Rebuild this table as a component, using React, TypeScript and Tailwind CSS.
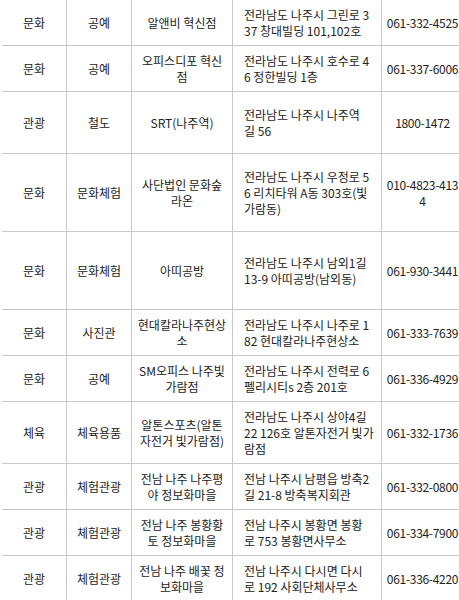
import React from 'react';

type Row = {
  cat: string;
  sub: string;
  name: string[];
  addr: string[];
  tel: string[];
  h: string;
};

const rows: Row[] = [
  { cat: '문화', sub: '공예', name: ['알앤비 혁신점'], addr: ['전라남도 나주시 그린로 3', '37 창대빌딩 101,102호'], tel: ['061-332-4525'], h: 'h-[46px]' },
  { cat: '문화', sub: '공예', name: ['오피스디포 혁신', '점'], addr: ['전라남도 나주시 호수로 4', '6 정한빌딩 1층'], tel: ['061-337-6006'], h: 'h-[46px]' },
  { cat: '관광', sub: '철도', name: ['SRT(나주역)'], addr: ['전라남도 나주시 나주역', '길 56'], tel: ['1800-1472'], h: 'h-[62px]' },
  { cat: '문화', sub: '문화체험', name: ['사단법인 문화숲', '라온'], addr: ['전라남도 나주시 우정로 5', '6 리치타워 A동 303호(빛', '가람동)'], tel: ['010-4823-413', '4'], h: 'h-[78px]' },
  { cat: '문화', sub: '문화체험', name: ['아띠공방'], addr: ['전라남도 나주시 남외1길', '13-9 아띠공방(남외동)'], tel: ['061-930-3441'], h: 'h-[78px]' },
  { cat: '문화', sub: '사진관', name: ['현대칼라나주현상', '소'], addr: ['전라남도 나주시 나주로 1', '82 현대칼라나주현상소'], tel: ['061-333-7639'], h: 'h-[46px]' },
  { cat: '문화', sub: '공예', name: ['SM오피스 나주빛', '가람점'], addr: ['전라남도 나주시 전력로 6', '펠리시티s 2층 201호'], tel: ['061-336-4929'], h: 'h-[46px]' },
  { cat: '체육', sub: '체육용품', name: ['알톤스포츠(알톤', '자전거 빛가람점)'], addr: ['전라남도 나주시 상야4길', '22 126호 알톤자전거 빛가', '람점'], tel: ['061-332-1736'], h: 'h-[62px]' },
  { cat: '관광', sub: '체험관광', name: ['전남 나주 나주평', '야 정보화마을'], addr: ['전남 나주시 남평읍 방축2', '길 21-8 방축복지회관'], tel: ['061-332-0800'], h: 'h-[46px]' },
  { cat: '관광', sub: '체험관광', name: ['전남 나주 봉황황', '토 정보화마을'], addr: ['전남 나주시 봉황면 봉황', '로 753 봉황면사무소'], tel: ['061-334-7900'], h: 'h-[46px]' },
  { cat: '관광', sub: '체험관광', name: ['전남 나주 배꽃 정', '보화마을'], addr: ['전남 나주시 다시면 다시', '로 192 사회단체사무소'], tel: ['061-336-4220'], h: 'h-[46px]' },
];

const Lines = ({ lines }: { lines: string[] }) => (
  <div>
    {lines.map((l, i) => (
      <div key={i} className="whitespace-nowrap">{l}</div>
    ))}
  </div>
);

export default function App() {
  return (
    <div className="w-[459px] h-[600px] overflow-hidden bg-white">
      <div
        className="w-[470px] pl-[2px] text-[12px] leading-[16px] text-[#222]"
        style={{ fontFamily: '"Noto Sans CJK KR", "Malgun Gothic", sans-serif' }}
      >
        {rows.map((r, i) => (
          <div
            key={i}
            className={`grid grid-cols-[65px_65px_101px_149px_90px] border-b border-[#c8c8c8] ${r.h}`}
          >
            <div className="flex items-center justify-center border-r border-[#c8c8c8]">{r.cat}</div>
            <div className="flex items-center justify-center border-r border-[#c8c8c8]">{r.sub}</div>
            <div className="flex items-center justify-center text-center border-r border-[#c8c8c8]">
              <Lines lines={r.name} />
            </div>
            <div className="flex items-center pl-[11px] border-r border-[#c8c8c8]">
              <Lines lines={r.addr} />
            </div>
            <div className="flex items-center justify-center text-center w-[81px] tracking-[-0.3px]">
              <Lines lines={r.tel} />
            </div>
          </div>
        ))}
      </div>
    </div>
  );
}
